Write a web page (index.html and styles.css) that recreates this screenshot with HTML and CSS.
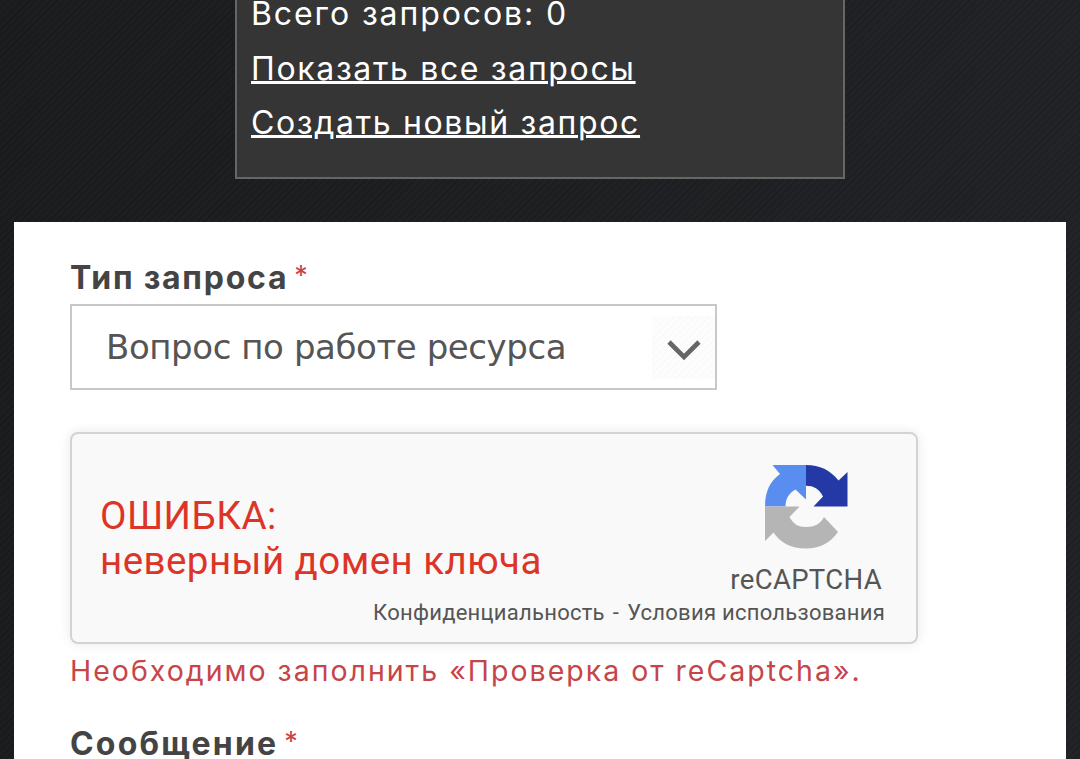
FILE: index.html
```html
<!DOCTYPE html>
<html lang="ru">
<head>
<meta charset="utf-8">
<title>Запросы</title>
<link rel="stylesheet" href="styles.css">
</head>
<body>

<div class="requests">
  <div class="row"><span class="total">Всего запросов: 0</span></div>
  <div class="row"><a class="all" href="#">Показать все запросы</a></div>
  <div class="row"><a class="new" href="#">Создать новый запрос</a></div>
</div>

<div class="form">
  <div class="label"><span class="type-label">Тип запроса</span><span class="star">*</span></div>
  <div class="select">
    <span class="select-text">Вопрос по работе ресурса</span>
    <div class="arrow">
      <svg width="34" height="22" viewBox="0 0 34 22"><path d="M2 3 L17 18 L32 3" fill="none" stroke="#666" stroke-width="4.6"/></svg>
    </div>
  </div>

  <div class="captcha">
    <div class="captcha-main">
      <div class="captcha-error">
        <div class="error-title">ОШИБКА:</div>
        <div class="error-text">неверный домен ключа</div>
      </div>
      <div class="captcha-logo">
        <svg width="90" height="90" viewBox="0 0 90 90">
          <path d="M45 3 C59 3 69 8 77.500 18.500 L86.500 10 V44.500 H52.500 L62 34.500 C58 27 53 23.800 45 23.800 Z" fill="#2439a5"/>
          <path d="M45 3 V37.500 L34.500 27.500 C27.500 31.500 24.500 37 24.500 44.500 H4 C4 29 9 19.500 19 12 L11.500 3 Z" fill="#5a8df0"/>
          <path d="M4 44.500 H38.500 L28.500 55 C32.500 62 37 65 45 65 C53 65 59.500 62 63 55 L77 70 C68.500 81.500 59 86.500 45 86.500 C30 86.500 20 81 12.500 70.500 L4 79 Z" fill="#b5b5b5"/>
        </svg>
        <div class="logo-text">reCAPTCHA</div>
      </div>
    </div>
    <div class="captcha-links"><span class="privacy">Конфиденциальность</span><span class="dash">-</span><span class="terms">Условия использования</span></div>
  </div>

  <div class="help"><span class="help-text">Необходимо заполнить «Проверка от reCaptcha».</span></div>
  <div class="label last"><span class="message-label">Сообщение</span><span class="star">*</span></div>
</div>

</body>
</html>
```

FILE: styles.css
```css
body {
  margin: 0;
  height: 759px;
  overflow: hidden;
  font-family: Inter, "Liberation Sans", sans-serif;
  background: repeating-linear-gradient(135deg, rgba(0,0,0,0.06) 0 2px, rgba(255,255,255,0.008) 2px 5px), linear-gradient(90deg, #1b1c1d, #1e1f21 50%, #202226);
}

/* requests box */
.requests {
  box-sizing: border-box;
  width: 610px;
  height: 194px;
  margin: -15px auto 0;
  padding-left: 14px;
  border: 2px solid #666;
  background: #353535;
}

.row {
  height: 54.5px;
  line-height: 54.5px;
  font-size: 32px;
  letter-spacing: 1.65px;
  white-space: nowrap;
  color: #fff;
}

.row a {
  color: #fff;
  text-decoration-thickness: 3px;
  text-underline-offset: 1px;
}

.row .total {
  letter-spacing: 1.9px;
}

/* form */
.form {
  box-sizing: border-box;
  height: 537px;
  margin: 43px 14px 0;
  padding: 32px 56px 0;
  overflow: hidden;
  background: #fff;
}

.label {
  display: flex;
  height: 50px;
  line-height: 48px;
  font-size: 32px;
  font-weight: 700;
  letter-spacing: 1.75px;
  color: #444;
}

.last {
  height: 48px;
}

.message-label {
  letter-spacing: 2.2px;
}

.star {
  margin-left: 6px;
  font-size: 27px;
  font-weight: 400;
  letter-spacing: 0;
  line-height: 44px;
  color: #d04045;
}

.select {
  display: flex;
  box-sizing: border-box;
  align-items: center;
  justify-content: space-between;
  width: 647px;
  height: 86px;
  padding-left: 34px;
  border: 2px solid #c8c8c8;
}

.select-text {
  font-family: "DejaVu Sans", sans-serif;
  font-size: 34px;
  letter-spacing: -0.42px;
  white-space: nowrap;
  color: #555;
}

.arrow {
  display: flex;
  box-sizing: border-box;
  align-items: center;
  justify-content: center;
  width: 63px;
  height: 63px;
  padding-top: 6px;
  background: repeating-linear-gradient(135deg, #fafafa 0 2px, #fdfdfd 2px 5px);
}

/* captcha widget */
.captcha {
  box-sizing: border-box;
  width: 848px;
  height: 212px;
  margin-top: 42px;
  border: 2px solid #d3d3d3;
  border-radius: 8px;
  background: #f9f9f9;
  box-shadow: 0 0 11px 1px rgba(0,0,0,0.08);
  font-family: Roboto, sans-serif;
}

.captcha-main {
  display: flex;
  justify-content: space-between;
  height: 165px;
  padding: 0 34px 0 28px;
}

.captcha-error {
  padding-top: 59px;
  font-size: 38.5px;
  line-height: 45px;
  letter-spacing: 0.45px;
  white-space: nowrap;
  color: #dc3527;
}

.captcha-logo {
  display: flex;
  flex-direction: column;
  align-items: center;
  padding-top: 28px;
  color: #555;
}

.logo-text {
  font-size: 27.5px;
  line-height: 32px;
  letter-spacing: 0.35px;
  margin-top: 12px;
}

.captcha-links {
  display: flex;
  justify-content: flex-end;
  padding-right: 31px;
  font-size: 22px;
  line-height: 28px;
  letter-spacing: 0.26px;
  color: #555;
}

.dash {
  margin: 0 8px;
}

.help {
  height: 76px;
  line-height: 54px;
  font-size: 28.5px;
  letter-spacing: 2px;
  white-space: nowrap;
  color: #c54548;
}
```
